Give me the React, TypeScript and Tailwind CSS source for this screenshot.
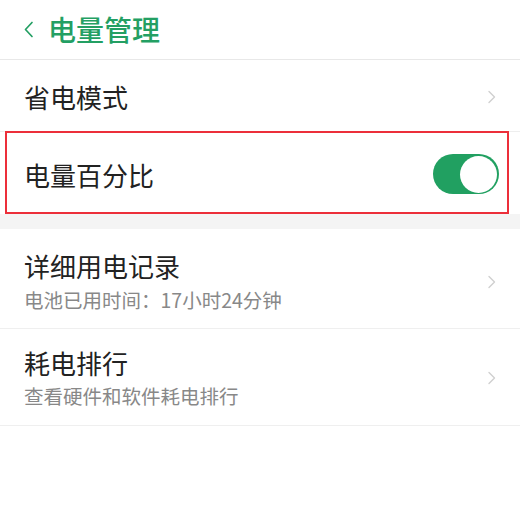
import { useState } from 'react';

const font = { fontFamily: '"Noto Sans CJK SC", "Noto Sans", sans-serif' };

function Chevron() {
  return (
    <svg width="10" height="14" viewBox="0 0 10 14" fill="none" className="shrink-0">
      <path d="M2 1.5L7.5 7L2 12.5" stroke="#d0d0d0" strokeWidth="1.4" strokeLinecap="round" strokeLinejoin="round" />
    </svg>
  );
}

function Toggle({ on, onChange }: { on: boolean; onChange: () => void }) {
  return (
    <button
      type="button"
      onClick={onChange}
      className={`w-[66px] h-[40px] rounded-full p-[2px] flex items-center ${on ? 'bg-[#21a061] justify-end' : 'bg-[#d9d9d9] justify-start'}`}
    >
      <span className="w-[37px] h-[37px] rounded-full bg-white block" />
    </button>
  );
}

export default function App() {
  const [percent, setPercent] = useState(true);

  return (
    <div className="w-[520px] h-[521px] bg-white overflow-hidden" style={font}>
      {/* 顶部栏 */}
      <div className="h-[60px] flex items-center border-b border-[#e8e8e8] pl-[23px] pb-[1px]">
        <svg width="11" height="17" viewBox="0 0 11 17" fill="none" className="mr-[14px] mt-[1px]">
          <path d="M9 1.5L2.5 8.5L9 15.5" stroke="#239f63" strokeWidth="1.7" strokeLinecap="round" strokeLinejoin="round" />
        </svg>
        <span className="text-[28px] leading-none font-medium text-[#239f63]">电量管理</span>
      </div>

      {/* 省电模式 */}
      <div className="h-[71px] flex items-center justify-between pl-[24px] pr-[23px] pt-[3px]">
        <span className="text-[26px] leading-none text-[#222]">省电模式</span>
        <Chevron />
      </div>

      {/* 电量百分比 */}
      <div className="relative h-[83px] flex items-center justify-between pl-[24px] pr-[21px] border-t border-[#eeeeee]">
        <span className="text-[26px] leading-none text-[#222] mt-[3px]">电量百分比</span>
        <div className="mt-[2px]">
          <Toggle on={percent} onChange={() => setPercent(!percent)} />
        </div>
        <div className="absolute left-[5px] right-[11px] top-[-1px] bottom-0 border-[2.5px] border-[#ec2f3a] pointer-events-none" />
      </div>

      <div className="h-[15px] bg-[#f4f4f4]" />

      {/* 详细用电记录 */}
      <div className="flex items-center justify-between pl-[24px] pr-[23px] pt-[22px] pb-[16px] border-b border-[#efefef]">
        <div className="flex flex-col gap-[7px]">
          <span className="text-[26px] leading-[30px] text-[#222]">详细用电记录</span>
          <span className="text-[19.5px] leading-[24px] text-[#888]">电池已用时间：17小时24分钟</span>
        </div>
        <Chevron />
      </div>

      {/* 耗电排行 */}
      <div className="flex items-center justify-between pl-[24px] pr-[23px] pt-[19px] pb-[17px] border-b border-[#efefef]">
        <div className="flex flex-col gap-[6px]">
          <span className="text-[26px] leading-[30px] text-[#222]">耗电排行</span>
          <span className="text-[19.5px] leading-[24px] text-[#888]">查看硬件和软件耗电排行</span>
        </div>
        <Chevron />
      </div>
    </div>
  );
}
